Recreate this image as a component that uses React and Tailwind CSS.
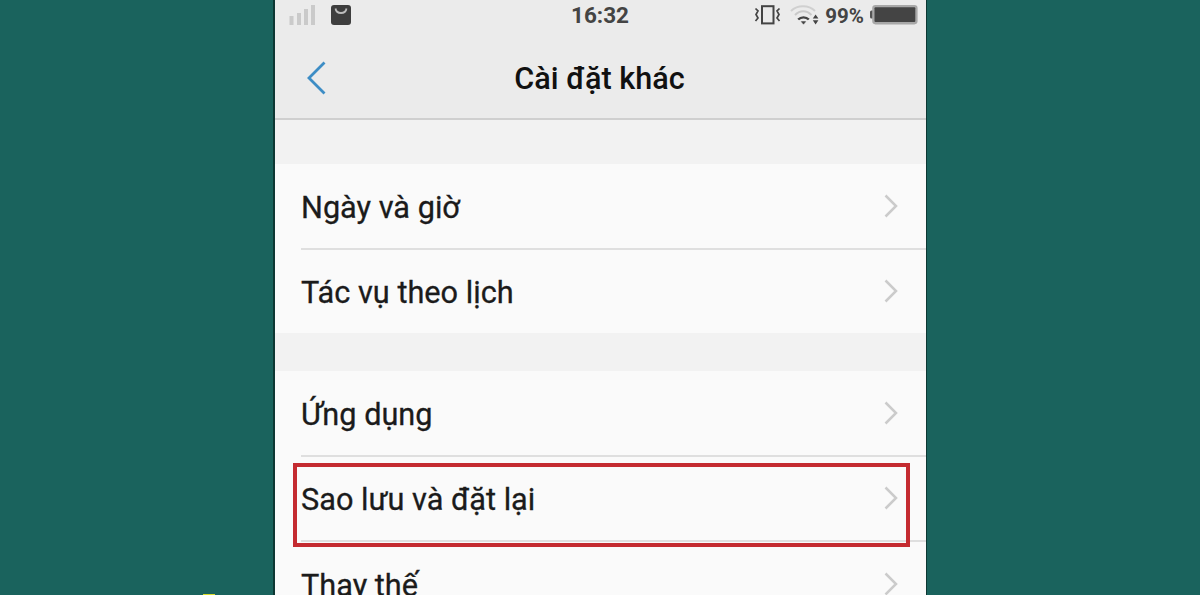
const groups = [
    ['Ngày và giờ', 'Tác vụ theo lịch'],
    ['Ứng dụng', 'Sao lưu và đặt lại', 'Thay thế']
];

const highlighted = 'Sao lưu và đặt lại';

function Chevron() {
    return (
        <svg className="h-6 w-3.5 shrink-0" viewBox="0 0 14 24" fill="none" stroke="#cbcbcb" strokeWidth="2.5">
            <path d="M1.5 1.5L12 12L1.5 22.5" />
        </svg>
    );
}

function StatusBar() {
    return (
        <div className="flex h-[30px] shrink-0 items-center justify-between pl-[14px] pr-2 text-[#444]">
            <div className="flex w-[200px] items-center gap-[15px]">
                <svg className="h-[22px] w-[27px]" viewBox="0 0 27 22" fill="#cacaca">
                    <rect x="0.5" y="12" width="4" height="9" />
                    <rect x="8" y="9" width="4" height="12" />
                    <rect x="15" y="5" width="4" height="16" />
                    <rect x="22" y="1" width="4" height="20" />
                </svg>
                <svg className="h-5 w-5" viewBox="0 0 20 20">
                    <rect width="20" height="20" rx="3" fill="#3e3e3e" />
                    <path d="M4.5 3.5C5.5 9.5 14.5 9.5 15.5 3.5" fill="none" stroke="#bdbdbd" strokeWidth="1.8" />
                </svg>
            </div>
            <span className="mt-px -ml-[7px] text-[22.5px] leading-none font-bold">16:32</span>
            <div className="flex w-[200px] items-center justify-end">
                <svg className="h-5 w-[27px]" viewBox="0 0 27 20" fill="none" stroke="#444">
                    <rect x="8" y="1.2" width="11.5" height="17.2" strokeWidth="2" />
                    <path d="M1.5 3.5L4 6L2 9.5L4 13L1.5 16M25.5 3.5L23 6L25 9.5L23 13L25.5 16" strokeWidth="1.7" />
                </svg>
                <svg className="ml-[9px] h-5 w-[29px]" viewBox="0 0 29 20" fill="none">
                    <path d="M1 6C7.5 -0.3 18.5 -0.3 25 6" stroke="#d0d0d0" strokeWidth="2" />
                    <path d="M5 10C10 5 16.5 5 21.5 10" stroke="#c9c9c9" strokeWidth="2" />
                    <path d="M8.2 14.5C11 11.6 16 11.6 18.8 14.5" stroke="#444" strokeWidth="2.4" />
                    <path d="M11.3 16.6H15.7L13.5 19.2Z" fill="#444" stroke="#444" strokeWidth="0.5" />
                    <path d="M22.8 13.6L25.6 9.4L28.4 13.6ZM22.8 15.2L25.6 19.4L28.4 15.2Z" fill="#444" />
                </svg>
                <span className="mt-0.5 ml-[6px] text-[20.5px] leading-none font-bold">99%</span>
                <svg className="ml-[5px] h-5 w-[49px]" viewBox="0 0 49 20">
                    <rect x="1" y="5.5" width="4" height="8" rx="1.5" fill="#555" />
                    <rect x="4" y="0.8" width="43.8" height="17.8" rx="2.5" fill="#a8a8a8" stroke="#a8a8a8" strokeWidth="1.6" />
                    <rect x="5.5" y="2.2" width="40.8" height="14.8" rx="1" fill="#444" />
                </svg>
            </div>
        </div>
    );
}

function Row({ label, last }) {
    return (
        <div className="relative h-[85.5px] shrink-0 pl-[26px]">
            <div className={`flex h-full items-center justify-between border-b-2 pr-7 ${last ? 'border-transparent' : 'border-[#dfdfdf]'}`}>
                <span className="pt-[5px] text-[30.7px] leading-none whitespace-nowrap [-webkit-text-stroke:0.3px_#1b1b1b]">{label}</span>
                <Chevron />
            </div>
            {label === highlighted && (
                <div className="absolute top-[6px] left-[18px] h-[84px] w-[617px] border-4 border-[#c42b30]" />
            )}
        </div>
    );
}

export default function App() {
    return (
        <div className="relative flex h-[595px] w-full justify-center overflow-hidden bg-[#1a635d] font-['Roboto',sans-serif] text-[#1b1b1b]">
            <div className="flex h-full w-[654px] flex-col overflow-hidden border-r border-l-2 border-[#0d3733] bg-[#f2f2f2]">
                <div className="flex h-[120px] shrink-0 flex-col border-b-2 border-[#cfcfcf] bg-[#ebebeb]">
                    <StatusBar />
                    <div className="grid flex-1 grid-cols-[60px_1fr_60px] items-center">
                        <svg className="mt-2 ml-8 h-9 w-5" viewBox="0 0 20 36" fill="none" stroke="#3d8dc5" strokeWidth="2.8">
                            <path d="M17.5 2.5L2 18L17.5 33.5" />
                        </svg>
                        <h1 className="mt-2.5 -ml-0.5 text-center text-[30.6px] leading-none font-medium text-[#111]">Cài đặt khác</h1>
                    </div>
                </div>
                {groups.map((rows, index) => (
                    <div key={index} className={`shrink-0 bg-[#fafafa] ${index === 0 ? 'mt-11 h-[169px]' : 'mt-[38px]'}`}>
                        {rows.map((label, i) => (
                            <Row key={label} label={label} last={i === rows.length - 1} />
                        ))}
                    </div>
                ))}
            </div>
            <div className="absolute top-[594px] left-[203px] h-2 w-3 bg-[#d9dc2b]" />
        </div>
    );
}
